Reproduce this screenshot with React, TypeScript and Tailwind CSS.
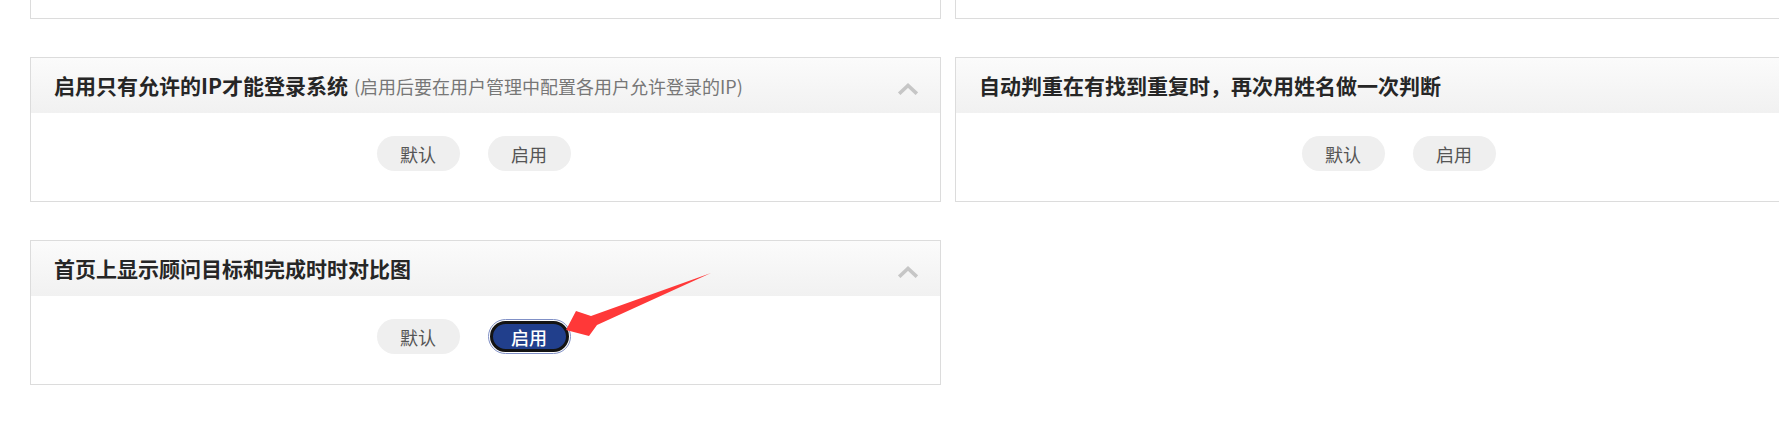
import React from 'react'

type Setting = {
  title: string
  note?: string
  active?: boolean
  collapsible?: boolean
}

const rows: (Setting | null)[] = [
  { title: '', collapsible: true },
  { title: '', collapsible: false },
  {
    title: '启用只有允许的IP才能登录系统',
    note: '(启用后要在用户管理中配置各用户允许登录的IP)',
    collapsible: true,
  },
  { title: '自动判重在有找到重复时，再次用姓名做一次判断', collapsible: false },
  { title: '首页上显示顾问目标和完成时时对比图', active: true, collapsible: true },
  null,
]

const font = { fontFamily: '"Noto Sans CJK SC", "Noto Sans", sans-serif' }

function Chevron() {
  return (
    <svg width="20" height="13" viewBox="0 0 20 13" className="mt-[6px] shrink-0">
      <polyline
        points="2.5,10.5 10,3.5 17.5,10.5"
        fill="none"
        stroke="#c6c6c6"
        strokeWidth="3.6"
        strokeLinecap="square"
      />
    </svg>
  )
}

function Card({ item }: { item: Setting }) {
  return (
    <div className="h-[145px] border border-[#dcdcdc] bg-white flex flex-col">
      <div className="h-[55px] shrink-0 flex items-center justify-between pl-[23px] pr-[22px] bg-gradient-to-b from-[#fbfbfb] to-[#f1f1f1]">
        <div className="flex items-baseline whitespace-nowrap">
          <span className="text-[21px] font-bold text-[#262626] leading-none">{item.title}</span>
          {item.note && (
            <span className="ml-[6px] text-[18px] text-[#777777] leading-none">{item.note}</span>
          )}
        </div>
        {item.collapsible && item.title && <Chevron />}
      </div>
      <div className="flex justify-center gap-[28px] pt-[23px] pr-[24px]">
        {item.title && (
          <>
            <button className="w-[83px] h-[35px] rounded-full bg-[#efefef] text-[18px] text-[#555555] leading-none">
              默认
            </button>
            {item.active ? (
              <button className="w-[83px] h-[35px] rounded-full border border-[#8090c6] bg-white p-[1px]">
                <span className="flex h-full w-full items-center justify-center rounded-full border-[3px] border-[#141414] bg-[#213f8c] text-[18px] font-medium text-white leading-none">
                  启用
                </span>
              </button>
            ) : (
              <button className="w-[83px] h-[35px] rounded-full bg-[#efefef] text-[18px] text-[#555555] leading-none">
                启用
              </button>
            )}
          </>
        )}
      </div>
    </div>
  )
}

export default function App() {
  return (
    <div className="relative w-[1779px] h-[444px] overflow-hidden bg-white" style={font}>
      <div className="grid grid-cols-[911px_911px] gap-x-[14px] gap-y-[38px] pl-[30px] -mt-[126px]">
        {rows.map((item, i) => (item ? <Card key={i} item={item} /> : <div key={i} />))}
      </div>

      {/* annotation arrow */}
      <svg className="absolute left-0 top-0 pointer-events-none" width="1779" height="444">
        <polygon
          points="711,273 597,325 589,336 566,330 576,311 591,316"
          fill="#ff3838"
        />
      </svg>
    </div>
  )
}
